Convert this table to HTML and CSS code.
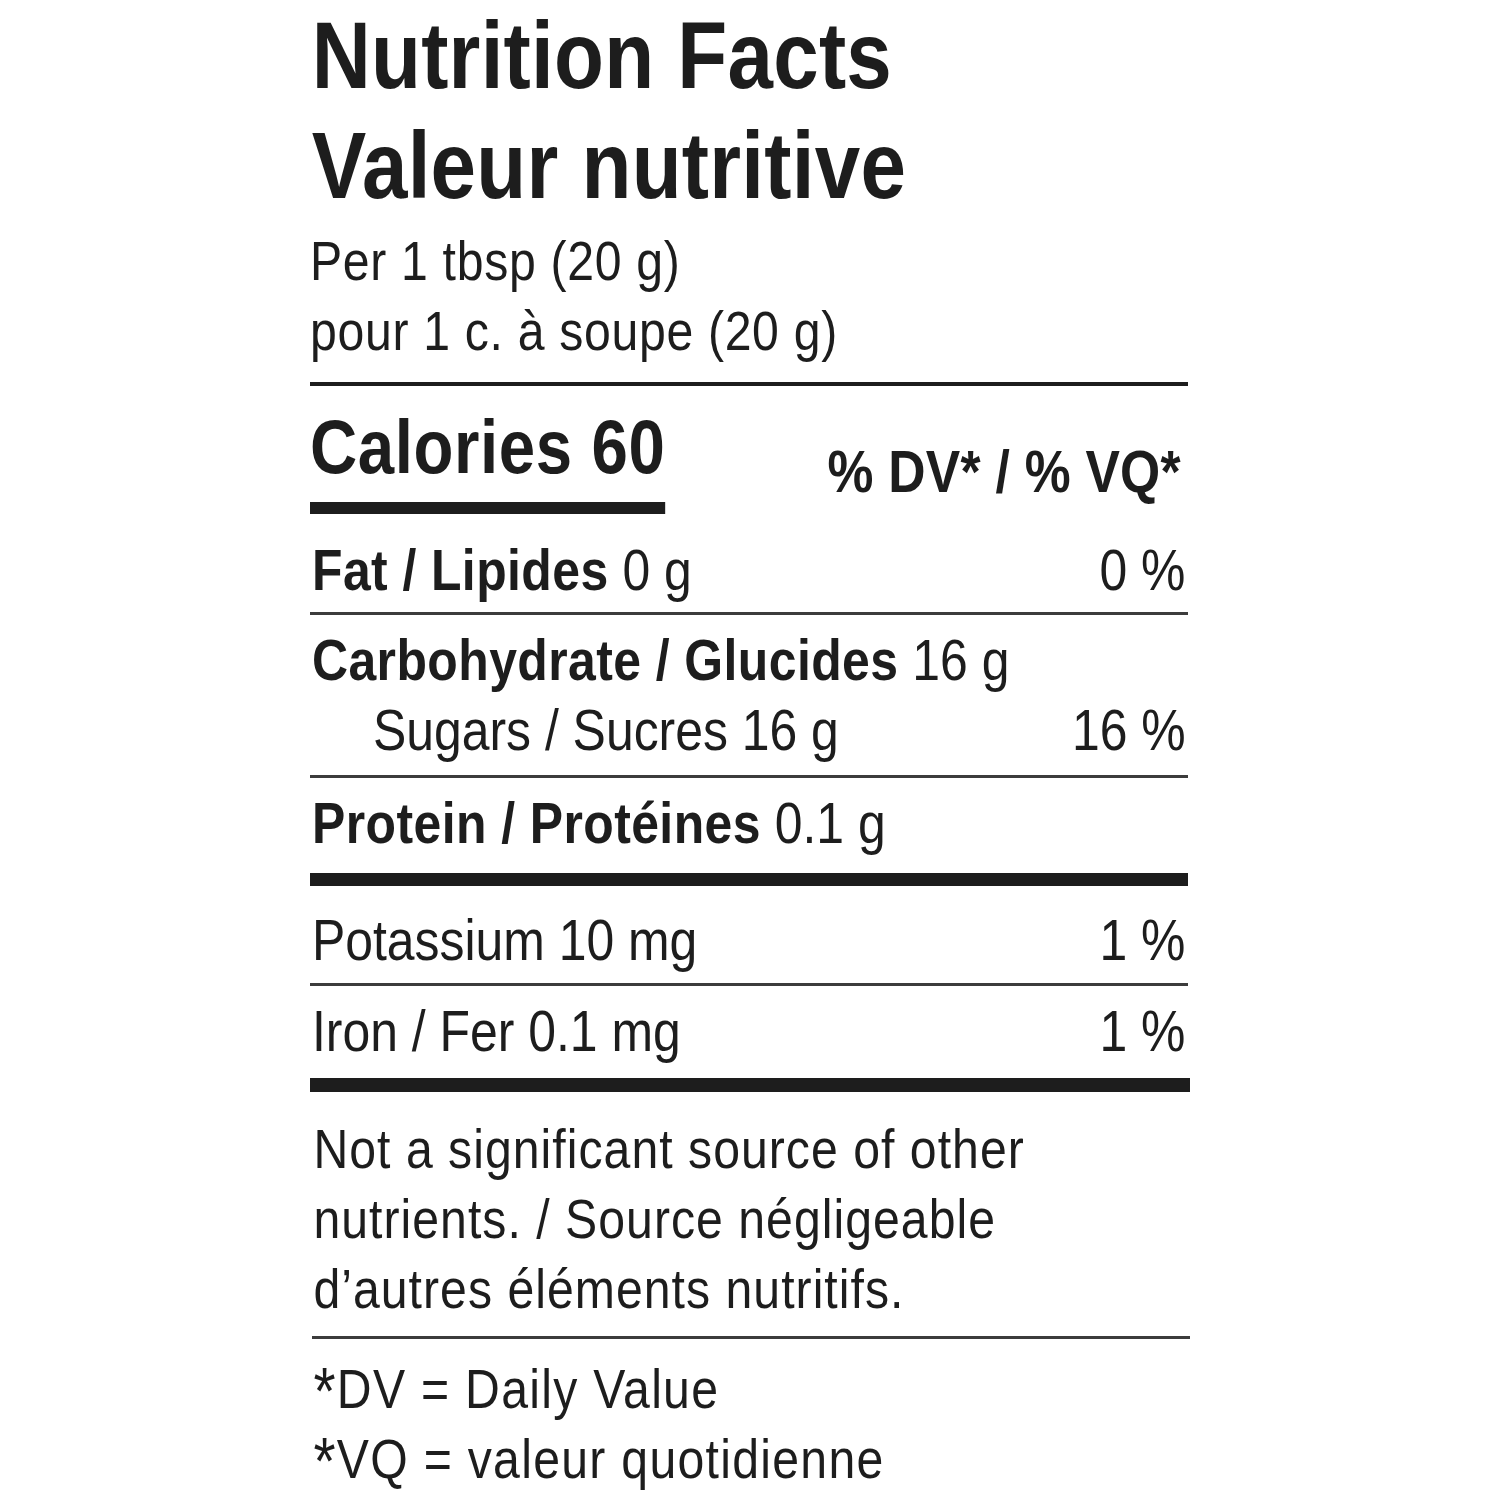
FILE: index.html
```html
<!DOCTYPE html>
<html lang="en">
<head>
<meta charset="utf-8">
<title>Nutrition Facts</title>
<link rel="stylesheet" href="styles.css">
</head>
<body>
<div class="label">
  <h1 class="title">Nutrition Facts<br>Valeur nutritive</h1>
  <div class="serving">Per 1 tbsp (20 g)<br>pour 1 c. à soupe (20 g)</div>
  <div class="rule rule-med"></div>
  <div class="cal-row">
    <div class="cal">Calories 60</div>
    <div class="dvhead">% DV* / % VQ*</div>
  </div>
  <div class="row row-fat">
    <span class="lbl"><b>Fat / Lipides</b> 0 g</span>
    <span class="pct">0 %</span>
  </div>
  <div class="rule rule-thin"></div>
  <div class="group group-carb">
    <div class="row"><span class="lbl"><b>Carbohydrate / Glucides</b> 16 g</span></div>
    <div class="row sub"><span class="lbl">Sugars / Sucres 16 g</span><span class="pct">16 %</span></div>
  </div>
  <div class="rule rule-thin"></div>
  <div class="row row-protein">
    <span class="lbl"><b>Protein / Protéines</b> 0.1 g</span>
  </div>
  <div class="rule rule-thick"></div>
  <div class="row row-pot">
    <span class="lbl">Potassium 10 mg</span>
    <span class="pct">1 %</span>
  </div>
  <div class="rule rule-thin"></div>
  <div class="row row-iron">
    <span class="lbl">Iron / Fer 0.1 mg</span>
    <span class="pct">1 %</span>
  </div>
  <div class="rule rule-thick rule-thick2"></div>
  <p class="note">Not a significant source of other<br>nutrients. / Source négligeable<br>d’autres éléments nutritifs.</p>
  <div class="rule rule-thin rule-foot"></div>
  <p class="legend"><span class="ast">*</span>DV = Daily Value<br><span class="ast">*</span>VQ = valeur quotidienne</p>
</div>
</body>
</html>
```
FILE: styles.css
```css
html, body {
  margin: 0;
  padding: 0;
  background: #ffffff;
}

body {
  font-family: "Liberation Sans", Arial, sans-serif;
  color: #1d1d1d;
}

.label {
  margin-left: 310px;
  width: 878px;
}

/* condensed look: Arial metrics narrowed */
.title,
.serving,
.cal,
.lbl,
.note,
.legend {
  transform: scaleX(0.86);
  transform-origin: left center;
  white-space: nowrap;
}

.dvhead,
.pct {
  transform: scaleX(0.86);
  transform-origin: right center;
  white-space: nowrap;
}

.title {
  margin: 0;
  font-size: 95px;
  line-height: 110px;
  font-weight: 700;
  letter-spacing: 0.3px;
  padding-left: 2px;
}

.serving {
  margin-top: 6px;
  font-size: 56px;
  line-height: 70px;
  letter-spacing: 0.8px;
}

.rule {
  background: #1d1d1d;
}

.rule-med {
  height: 4px;
  margin-top: 16px;
}

.rule-thin {
  height: 3px;
  background: #3c3c3c;
}

.rule-thick {
  height: 13px;
}

.rule-thick2 {
  height: 14px;
  margin-right: -2px;
}

.rule-foot {
  margin-left: 2px;
  margin-right: -2px;
}

.cal-row {
  display: flex;
  justify-content: space-between;
  align-items: flex-start;
  padding-top: 21px;
}

.cal {
  font-size: 76px;
  line-height: 80px;
  font-weight: 700;
  letter-spacing: 0.7px;
  padding-bottom: 15px;
  border-bottom: 12px solid #1d1d1d;
}

.dvhead {
  font-size: 60px;
  line-height: 70px;
  font-weight: 700;
  letter-spacing: 0.3px;
  padding-top: 30px;
  padding-right: 8px;
}

.row {
  display: flex;
  justify-content: space-between;
  font-size: 58px;
  line-height: 70px;
  padding-left: 2px;
}

.row b {
  font-weight: 700;
  letter-spacing: 0.5px;
}

.pct {
  padding-right: 3px;
}

.row-fat {
  padding-top: 21px;
  padding-bottom: 7px;
}

.group-carb {
  padding-top: 10px;
  padding-bottom: 10px;
}

.sub {
  padding-left: 63px;
}

.row-protein {
  padding-top: 10px;
  padding-bottom: 15px;
}

.row-pot {
  padding-top: 19px;
  padding-bottom: 8px;
}

.row-iron {
  padding-top: 10px;
  padding-bottom: 12px;
}

.note {
  margin: 0;
  padding-top: 22px;
  padding-bottom: 12px;
  padding-left: 4px;
  font-size: 56px;
  line-height: 70px;
  letter-spacing: 1.2px;
}

.legend {
  margin: 0;
  padding-top: 15px;
  padding-left: 4px;
  font-size: 56px;
  line-height: 70px;
  letter-spacing: 1.5px;
}

.ast {
  font-size: 66px;
  line-height: 0;
  vertical-align: -6px;
}
```
